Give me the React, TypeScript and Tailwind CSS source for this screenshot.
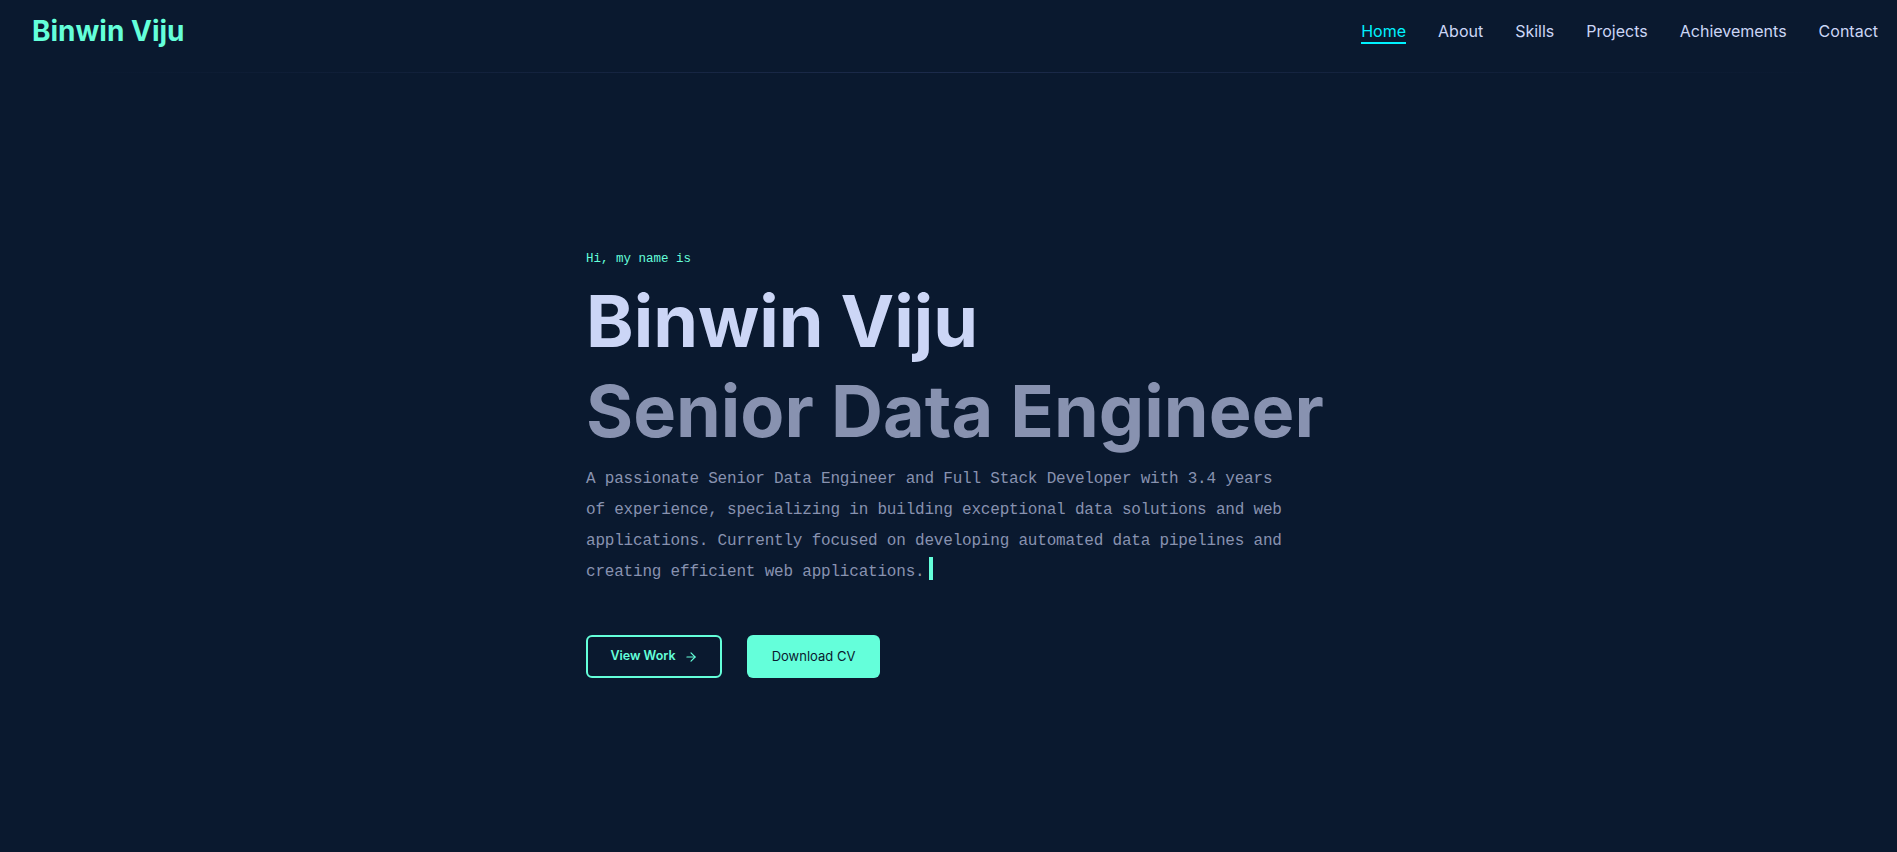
import { ArrowRight } from 'lucide-react'

const NAV_LINKS = ['Home', 'About', 'Skills', 'Projects', 'Achievements', 'Contact']

const INTRO =
  'A passionate Senior Data Engineer and Full Stack Developer with 3.4 years of experience, specializing in building exceptional data solutions and web applications. Currently focused on developing automated data pipelines and creating efficient web applications.'

function Header() {
  return (
    <div>
      <header className="h-[72px] flex items-start justify-between pl-8 pr-[19px]">
        <a className="mt-[17px] text-[28px] leading-none font-bold text-[#64ffda]">Binwin Viju</a>
        <nav className="mt-[19px] flex items-center gap-8 text-base leading-6">
          {NAV_LINKS.map((link, i) => (
            <a
              key={link}
              className={`relative ${i === 0 ? 'text-[#00f2ff]' : 'text-[#ccd6f6]'}`}
            >
              {link}
              {i === 0 && <span className="absolute left-0 right-0 -bottom-px h-[2px] bg-[#00f2ff]" />}
            </a>
          ))}
        </nav>
      </header>
      {/* faded divider */}
      <div className="h-px bg-linear-to-r from-transparent from-[3%] via-[#1c2b4b] to-transparent to-[97%]" />
    </div>
  )
}

export default function App() {
  return (
    <div className="h-[852px] overflow-hidden bg-[#0a192f] font-['Inter',sans-serif]">
      <Header />

      <main className="h-[779px] flex items-center justify-center">
        <div className="w-[725px] mt-[2px]">
          <p className="font-['Liberation_Mono',monospace] text-[12.5px] leading-[20px] text-[#64ffda] mb-[12px]">
            Hi, my name is
          </p>
          <h1 className="text-[72px] leading-[1.1] font-bold text-[#ccd6f6] whitespace-nowrap">
            Binwin Viju
          </h1>
          <h2 className="mt-[11px] text-[72px] leading-[1.1] font-bold text-[#8892b0] whitespace-nowrap">
            Senior Data Engineer
          </h2>
          <p className="mt-[14px] max-w-[712px] font-['Liberation_Mono',monospace] text-base leading-[31px] tracking-[-0.2px] text-[#8892b0]">
            {INTRO}
            <span className="inline-block align-top ml-[5px] w-1 h-[23px] bg-[#64ffda]" />
          </p>

          <div className="mt-[47px] flex items-center gap-[25px]">
            <button className="w-[136px] h-[43px] flex items-center justify-center gap-2 rounded-md border-2 border-[#64ffda] text-[12.5px] font-semibold text-[#64ffda]">
              View Work
              <ArrowRight className="w-3.5 h-3.5" strokeWidth={2} />
            </button>
            <button className="w-[133px] h-[43px] flex items-center justify-center rounded-md bg-[#64ffda] text-[13px] text-[#0a192f]">
              Download CV
            </button>
          </div>
        </div>
      </main>
    </div>
  )
}
